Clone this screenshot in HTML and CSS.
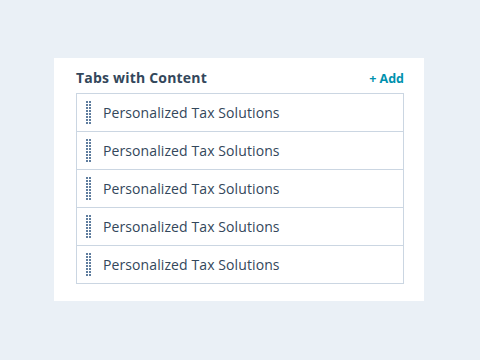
FILE: index.html
```html
<!DOCTYPE html>
<html>
<head>
<meta charset="utf-8">
<link rel="stylesheet" href="styles.css">
</head>
<body>
<div class="card">
  <div class="header">
    <span class="title">Tabs with Content</span>
    <span class="add">+ Add</span>
  </div>
  <ul class="list">
    <li class="row"><span class="handle"></span><span class="label">Personalized Tax Solutions</span></li>
    <li class="row"><span class="handle"></span><span class="label">Personalized Tax Solutions</span></li>
    <li class="row"><span class="handle"></span><span class="label">Personalized Tax Solutions</span></li>
    <li class="row"><span class="handle"></span><span class="label">Personalized Tax Solutions</span></li>
    <li class="row"><span class="handle"></span><span class="label">Personalized Tax Solutions</span></li>
  </ul>
</div>
</body>
</html>
```
FILE: styles.css
```css
html, body {
  margin: 0;
  padding: 0;
}
body {
  width: 480px;
  height: 360px;
  background: #eaf0f6;
  font-family: "Open Sans", "Liberation Sans", sans-serif;
  color: #33475b;
  padding-top: 58px;
  padding-left: 54px;
  box-sizing: border-box;
}
.card {
  width: 370px;
  height: 243px;
  background: #ffffff;
  box-sizing: border-box;
  padding: 9px 20px 0 22px;
}
.header {
  display: flex;
  justify-content: space-between;
  align-items: baseline;
  height: 26px;
  line-height: 22px;
}
.title {
  font-size: 14px;
  font-weight: 700;
  letter-spacing: 0.2px;
  color: #33475b;
}
.add {
  font-size: 12.5px;
  font-weight: 700;
  color: #0091ae;
}
.list {
  list-style: none;
  margin: 0;
  padding: 0;
  border: 1px solid #cbd6e2;
}
.row {
  display: flex;
  align-items: center;
  height: 37px;
  border-top: 1px solid #cbd6e2;
}
.row:first-child {
  border-top: none;
}
.handle {
  width: 5px;
  height: 23px;
  margin-left: 9px;
  margin-right: 12px;
  background-image:
    linear-gradient(to bottom, transparent 0, transparent 2px, #ffffff 2px, #ffffff 3px),
    linear-gradient(to right, #5f7d9e 0, #5f7d9e 2px, transparent 2px, transparent 3px);
  background-size: 5px 3px, 3px 3px;
  background-repeat: repeat-y, repeat;
}
.label {
  font-size: 14px;
  letter-spacing: 0.1px;
  color: #33475b;
}
```
